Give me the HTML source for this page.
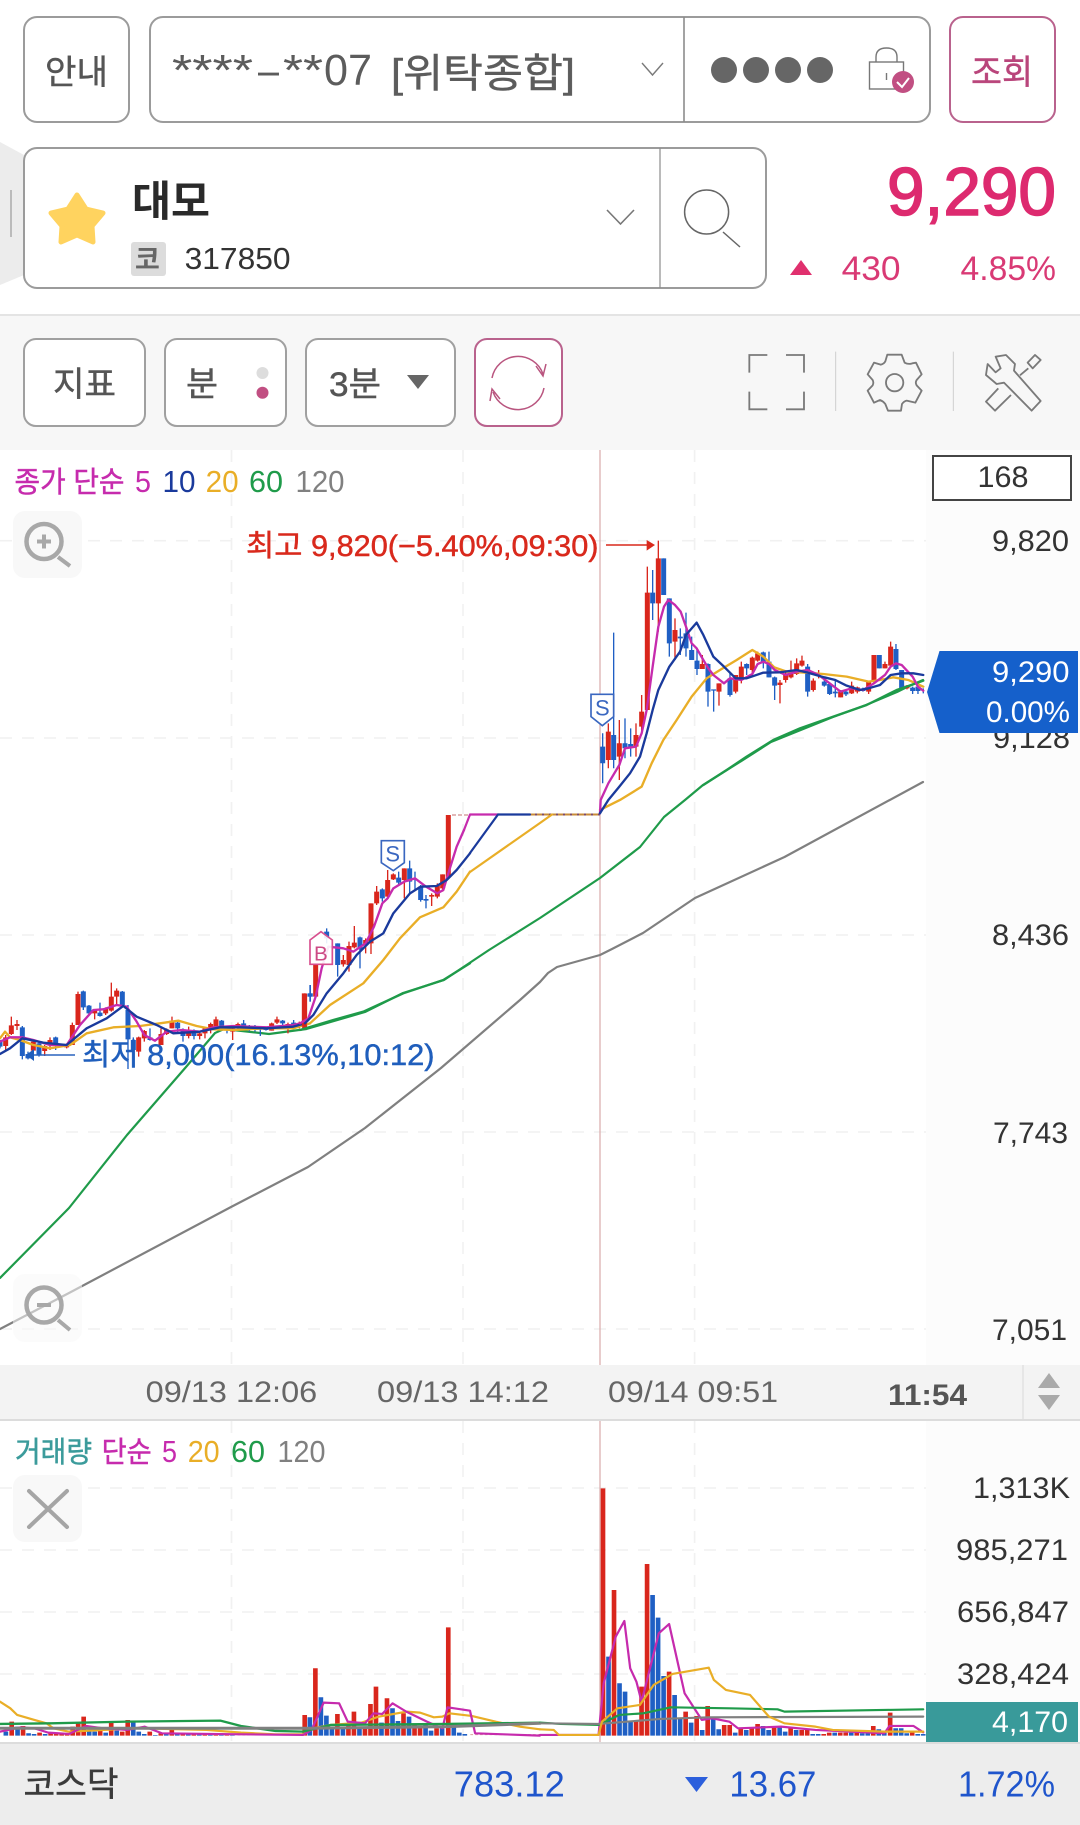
<!DOCTYPE html>
<html lang="ko">
<head>
<meta charset="utf-8">
<title>차트</title>
<style>
html,body{margin:0;padding:0;background:#fff;width:1080px;height:1825px;overflow:hidden}
svg{display:block;filter:blur(.35px)}
text{font-family:"Liberation Sans","Noto Sans CJK KR",sans-serif;white-space:pre}
.ma{fill:none;stroke-linejoin:round;stroke-linecap:round}
.ax{font-size:30px;fill:#333}
.m{stroke-width:.45px;paint-order:stroke}
</style>
</head>
<body>
<svg xmlns="http://www.w3.org/2000/svg" width="1080" height="1825" viewBox="0 0 1080 1825">
<rect width="1080" height="1825" fill="#fff"/>

<!-- top row -->
<rect x="24" y="17" width="105" height="105" rx="13" fill="#fff" stroke="#9b9b9b" stroke-width="2"/>
<text class="m" x="45" y="84" font-size="34" fill="#555" stroke="#555" textLength="63" lengthAdjust="spacingAndGlyphs">안내</text>
<rect x="150" y="17" width="780" height="105" rx="13" fill="#fff" stroke="#9b9b9b" stroke-width="2"/>
<path d="M684 17V122" stroke="#8c8c8c" stroke-width="1.600"/>
<g font-size="44" fill="#5c5c5c">
<text x="172" y="85" textLength="81" lengthAdjust="spacingAndGlyphs">****</text>
<text x="258" y="85" textLength="21" lengthAdjust="spacingAndGlyphs">–</text>
<text x="283" y="85" textLength="40" lengthAdjust="spacingAndGlyphs">**</text>
<text x="324" y="85" textLength="48" lengthAdjust="spacingAndGlyphs">07</text>
</g>
<text class="m" x="391" y="87" font-size="40" fill="#5c5c5c" stroke="#5c5c5c" textLength="184" lengthAdjust="spacingAndGlyphs">[위탁종합]</text>
<path d="M642 63L652.500 75L663 63" fill="none" stroke="#7a7a7a" stroke-width="1.400"/>
<g fill="#666"><circle cx="724" cy="70" r="13"/><circle cx="756" cy="70" r="13"/><circle cx="788" cy="70" r="13"/><circle cx="820" cy="70" r="13"/></g>
<rect x="869.500" y="62" width="34" height="27" fill="none" stroke="#777" stroke-width="1.400"/>
<path d="M876 62V57Q876 48 886.500 48Q897 48 897 57V62M886.500 73V80" fill="none" stroke="#777" stroke-width="1.400"/>
<circle cx="903" cy="82" r="11" fill="#c14f82"/>
<path d="M897 82L902 87L909 78" fill="none" stroke="#fff" stroke-width="2"/>
<rect x="950" y="17" width="105" height="105" rx="13" fill="#fff" stroke="#b9628d" stroke-width="2"/>
<text class="m" x="971" y="84" font-size="34" fill="#b9457b" stroke="#b9457b" textLength="62" lengthAdjust="spacingAndGlyphs">조회</text>

<!-- stock row -->
<polygon points="0,142 24,155 24,275 0,285" fill="#ececec"/>
<path d="M11 190V237" stroke="#bbb" stroke-width="2"/>
<rect x="24" y="148" width="742" height="140" rx="13" fill="#fff" stroke="#9b9b9b" stroke-width="2"/>
<path d="M660 148V288" stroke="#8c8c8c" stroke-width="1.200"/>
<polygon points="77,195 86,209 103,213 92,226 93,242 77,235 61,242 62,226 51,213 68,209" fill="#ffd35f" stroke="#ffd35f" stroke-width="5" stroke-linejoin="round"/>
<text x="132" y="216" font-size="42" font-weight="700" fill="#2a2a2a" textLength="78" lengthAdjust="spacingAndGlyphs">대모</text>
<rect x="131" y="242" width="35" height="34" rx="3" fill="#dcdcdc"/>
<text x="135" y="269" font-size="27" font-weight="700" fill="#666">코</text>
<text x="184.600" y="269" font-size="31" fill="#333" textLength="106" lengthAdjust="spacingAndGlyphs">317850</text>
<path d="M607 210L620.500 224L634 210" fill="none" stroke="#777" stroke-width="1.600"/>
<circle cx="706.600" cy="212" r="22" fill="none" stroke="#666" stroke-width="1.500"/>
<path d="M723 232L740 247" stroke="#666" stroke-width="1.500"/>
<text x="887" y="215" font-size="68" fill="#dd2a6f" stroke="#dd2a6f" stroke-width="1.500" textLength="169" lengthAdjust="spacingAndGlyphs">9,290</text>
<polygon points="790,275 801,260 812,275" fill="#e0306e"/>
<text x="841.600" y="280" font-size="34" fill="#d93a75" textLength="59" lengthAdjust="spacingAndGlyphs">430</text>
<text x="960.500" y="280" font-size="34" fill="#d93a75" textLength="95.500" lengthAdjust="spacingAndGlyphs">4.85%</text>

<!-- toolbar -->
<rect x="0" y="314" width="1080" height="136" fill="#f7f7f7"/>
<rect x="0" y="314" width="1080" height="2" fill="#e4e4e4"/>
<rect x="24" y="339" width="121" height="87" rx="12" fill="#fff" stroke="#a0a0a0" stroke-width="2"/>
<text class="m" x="53" y="396" font-size="34" fill="#555" stroke="#555" textLength="63" lengthAdjust="spacingAndGlyphs">지표</text>
<rect x="165" y="339" width="121" height="87" rx="12" fill="#fff" stroke="#a0a0a0" stroke-width="2"/>
<text class="m" x="186" y="396" font-size="34" fill="#555" stroke="#555" textLength="32" lengthAdjust="spacingAndGlyphs">분</text>
<circle cx="262.500" cy="373" r="6" fill="#ddd"/><circle cx="262.500" cy="392.700" r="6" fill="#c14f82"/>
<rect x="306" y="339" width="149" height="87" rx="12" fill="#fff" stroke="#a0a0a0" stroke-width="2"/>
<text class="m" x="329" y="396" font-size="34" fill="#555" stroke="#555" textLength="52" lengthAdjust="spacingAndGlyphs">3분</text>
<polygon points="407,375 429,375 418,389" fill="#666"/>
<rect x="475" y="339" width="87" height="87" rx="12" fill="#fff" stroke="#b9628d" stroke-width="2"/>
<path d="M492 378A26.500 26.500 0 0 1 543 374M536 366L543 376L546 364M544 388A26.500 26.500 0 0 1 493 392M500 399L492 389L490 401" fill="none" stroke="#b9557f" stroke-width="1.500"/>
<g transform="translate(730 340) scale(.3333)" fill="none" stroke="#7a7a7a" stroke-width="5.500">
<path d="M58 98V45H112M168 45H222V98M58 155V208H112M168 208H222V155"/>
<path d="M317 35V213M670 35V213" stroke="#cfcfcf" stroke-width="3"/>
<path d="M472 44H515L524 68Q535 74 547 70L558 68L575 103L560 120Q555 128 560 136L575 152L556 188L530 182Q522 184 516 192L513 212H474L466 192Q460 184 450 180L432 188L413 152L428 136Q432 128 428 120L413 103L432 68L452 74Q462 72 466 64Z" stroke-linejoin="round"/>
<circle cx="494" cy="128" r="26"/>
<path d="M797 50L828 45L855 72L852 92L932 183L905 212L822 128L800 132L768 105L773 72L797 97L812 85Z" stroke-linejoin="round"/>
<path d="M893 68L915 45L932 60L908 85ZM895 85L870 106M805 145L768 185L795 212L843 165" stroke-linejoin="round"/>
</g>

<!-- price chart background -->
<rect x="926" y="450" width="154" height="915" fill="#fcfcfc"/>
<g stroke="#f1f1f1" stroke-width="1.600" stroke-dasharray="12 10" fill="none">
<path d="M0 540.700H926M0 738H926M0 935H926M0 1132H926M0 1329H926"/>
<path d="M231.500 450V1365M463 450V1365M694.600 450V1365"/>
</g>
<path d="M600 450V1365" stroke="#dbb0b0" stroke-width="1.300"/>

<!-- legend -->
<g font-size="31">
<text class="m" x="14.500" y="492" font-size="29" fill="#c62bad" stroke="#c62bad" textLength="110" lengthAdjust="spacingAndGlyphs">종가 단순</text>
<text x="135" y="492" fill="#c62bad" textLength="16" lengthAdjust="spacingAndGlyphs">5</text>
<text x="162.500" y="492" fill="#1a3a9c" textLength="33" lengthAdjust="spacingAndGlyphs">10</text>
<text x="205.600" y="492" fill="#e9ae27" textLength="33" lengthAdjust="spacingAndGlyphs">20</text>
<text x="249" y="492" fill="#1f9b4a" textLength="34" lengthAdjust="spacingAndGlyphs">60</text>
<text x="295.500" y="492" fill="#808080" textLength="49" lengthAdjust="spacingAndGlyphs">120</text>
</g>
<rect x="933" y="456" width="138" height="44" fill="#fff" stroke="#444" stroke-width="2"/>
<text x="977.500" y="487" font-size="30" fill="#333" textLength="51" lengthAdjust="spacingAndGlyphs">168</text>

<!-- MA lines long -->
<path class="ma" stroke="#808080" stroke-width="2.200" d="M0 1329L69 1293L231 1207L308 1167L365 1128L441 1068L520 1000L540 982L548 973L557 967L600 955L612 949L643 933L695 898L784.500 857L923 782"/>
<path class="ma" stroke="#1f9b4a" stroke-width="2.200" d="M0 1278L69 1208L127 1135L186 1067L215 1033L224 1029L269 1034L306.500 1029L365 1012L403 993L444 980L489 950L540 918L600 878L640 847L664 817L685 800L703 785L743 760L771 742L833 717L866 705L897 692L907 687L923 680"/>

<!-- left candles: zoom8 -->
<g transform="translate(0 950) scale(.3333)" fill="none">
<path stroke="#d9261c" stroke-width="4" d="M17 255V300M34 200V255M51 210V240M100 270V320M134 285V318M150 262V300M200 280V295M217 218V285M234 125V225M284 178V208M317 172V195M334 98V185M350 115V165M416 260V320M433 240V275M483 235V285M500 235V255M516 200V235M566 230V265M599 248V268M615 235V265M632 218V250M648 200V235M698 232V270M714 218V240M815 218V242M831 200V222M864 218V250M898 215V235M914 130V240"/>
<path stroke="#1f5fc4" stroke-width="4" d="M0 270V295M67 228V328M84 305V328M117 275V320M167 260V300M250 122V180M267 165V195M300 158V200M367 123V168M384 165V357M400 262V320M450 235V272M533 215V250M549 235V275M582 238V268M665 210V240M681 228V250M731 210V240M748 225V245M765 225V245M781 228V258M798 232V242M848 210V232M881 210V232M931 105V155"/>
<path stroke="#d9261c" stroke-width="15" d="M17 262V288M34 226V252M51 222V228M100 275V302M134 288V303M150 270V282M200 283V292M217 225V285M234 132V225M284 180V190M317 177V190M334 140V182M350 122V140M416 262V305M433 243V265M483 252V285M500 238V252M516 212V235M566 240V258M599 250V258M615 235V250M632 222V240M648 208V235M698 236V245M714 222V235M815 220V242M831 208V218M864 222V228M898 222V228M914 132V235"/>
<path stroke="#1f5fc4" stroke-width="15" d="M0 272V290M67 232V318M84 312V325M117 280V315M167 262V287M250 124V172M267 167V190M300 188V198M367 125V165M384 180V268M400 270V300M450 262V270M533 218V235M549 238V258M582 245V258M665 212V235M681 232V238M731 220V232M748 230V235M765 232V236M781 232V236M798 233V240M848 212V220M881 218V228M931 130V140"/>
<path class="ma" stroke="#e9ae27" stroke-width="7" d="M0 265L15 245L30 262L60 270L100 285L150 295L210 285L260 250L340 232L420 228L480 220L535 212L590 228L640 238L700 240L800 235L880 235L930 220"/>
<path class="ma" stroke="#c62bad" stroke-width="7" d="M0 275L30 262L67 262L100 270L150 285L200 285L240 225L280 180L310 178L350 165L380 170L410 215L433 255L465 272L500 245L545 240L600 245L640 232L700 228L800 232L880 225L900 220"/>
<path class="ma" stroke="#1a3a9c" stroke-width="7" d="M0 312L30 295L67 265L130 278L200 285L260 235L320 205L370 168L410 200L470 225L520 250L600 245L660 232L720 232L800 235L880 230L915 220"/>
</g>

<!-- middle candles: zoom10 -->
<g transform="translate(300 830) scale(.3333)" fill="none">
<path stroke="#d9261c" stroke-width="4" d="M130 375V410M147 335V425M163 288V355M197 325V370M213 220V372M230 168V225M263 120V205M280 130V150M313 115V205M395 190V228M412 160V205M428 133V185"/>
<path stroke="#1f5fc4" stroke-width="4" d="M30 465V515M80 295V340M113 340V440M180 320V415M247 175V215M296 125V165M329 92V190M345 125V180M362 165V215M378 195V235"/>
<path stroke="#d9261c" stroke-width="15" d="M13 490V590M47 405V500M130 390V403M147 348V405M163 338V352M197 330V345M213 220V340M230 185V220M263 150V200M280 133V148M313 115V150M395 195V200M412 165V200M428 133V175M445 -45V140"/>
<path stroke="#1f5fc4" stroke-width="15" d="M30 490V500M80 305V325M113 340V405M180 322V358M247 178V205M296 143V158M329 115V155M362 170V210M378 207V212"/>
<path class="ma" stroke="#e9ae27" stroke-width="7" d="M30 580L90 525L190 460L250 390L300 325L360 262L430 232L470 185L510 125"/>
<path class="ma" stroke="#1f9b4a" stroke-width="7" d="M0 600L100 570L190 545L310 490L430 450L510 400"/>
<path class="ma" stroke="#c62bad" stroke-width="7" d="M0 580L25 565L47 500L65 415L85 350L130 355L160 365L197 340L222 290L247 220L263 205L280 175L313 155L345 145L378 170L412 190L430 180L445 130L470 50L492 0"/>
<path class="ma" stroke="#1a3a9c" stroke-width="7" d="M15 580L40 555L80 490L130 430L170 375L210 335L250 310L280 250L330 190L362 170L410 168L440 150L470 120L510 70"/>
<polygon points="30,330 63,305 97,330 97,403 30,403" fill="#fff" fill-opacity=".9" stroke="#d8508f" stroke-width="5"/>
<text x="42" y="392" font-size="62" fill="#cc4a85">B</text>
<polygon points="244,32 313,32 313,98 280,122 244,98" fill="#fff" stroke="#3a67c0" stroke-width="5"/>
<text x="256" y="94" font-size="66" fill="#3a67c0">S</text>
</g>

<!-- flat section -->
<path d="M470 814.500H600" stroke="#7e4a63" stroke-width="2"/>
<path d="M530 814.500H600" stroke="#c88c3a" stroke-width="2" stroke-dasharray="5 2"/>
<path class="ma" stroke="#c62bad" stroke-width="2.200" d="M464 830L470 814.500H498"/>
<path class="ma" stroke="#1a3a9c" stroke-width="2.200" d="M470 853L498 814.500H530"/>
<path class="ma" stroke="#e9ae27" stroke-width="2.200" d="M470 872L540 823L552 814.500"/>
<path d="M452 815H470" stroke="#d9a0a0" stroke-width="1.500" stroke-dasharray="4 2"/>

<!-- right candles: zoom9 -->
<g transform="translate(580 520) scale(.3333)" fill="none">
<path stroke="#d9261c" stroke-width="4" d="M85 610V745M118 600V780M168 610V710M185 525V640M202 140V570M235 62V335M285 295V420M367 405V447M417 490V557M467 465V520M484 425V490M517 410V470M533 395V425M600 480V550M617 450V488M633 422V475M650 415V465M666 407V440M700 475V515M716 450V475M782 510V532M815 485V522M832 500V520M866 482V522M882 405V490M915 425V445M932 365V440M981 495V508"/>
<path stroke="#1f5fc4" stroke-width="4" d="M68 640V790M101 338V745M135 595V715M152 625V710M218 150V300M251 115V225M268 235V410M301 325V405M318 278V410M335 350V420M351 385V465M384 430V560M401 510V575M450 460V530M500 430V465M550 395V445M567 395V472M584 470V540M683 432V530M733 475V500M749 490V525M766 478V532M798 510V528M849 503V515M898 405V445M948 372V450M965 450V508M998 500V522M1014 497V522M1030 505V520"/>
<path stroke="#d9261c" stroke-width="15" d="M85 635V720M118 670V710M168 645V680M185 575V620M202 218V570M235 115V250M285 330V365M367 432V447M417 490V515M467 465V515M484 440V475M517 413V450M533 400V422M600 488V495M617 460V480M633 450V472M650 430V462M666 422V437M700 482V510M782 515V532M815 497V520M832 502V515M866 485V515M882 405V485M915 432V445M932 380V437M981 497V505"/>
<path stroke="#1f5fc4" stroke-width="15" d="M68 680V730M101 645V720M135 670V685M152 672V684M218 218V250M251 115V225M268 235V370M301 350V355M318 340V385M335 390V420M351 422V447M384 432V515M401 508V512M450 475V525M500 432V445M550 397V425M567 425V472M584 472V497M683 440V515M733 485V497M749 492V522M766 515V520M798 515V523M849 505V513M898 405V445M948 387V447M965 450V507M998 503V513M1014 500V513"/>
<path class="ma" stroke="#e9ae27" stroke-width="7" d="M60 870L120 840L185 800L215 730L250 660L290 600L335 530L380 475L420 450L470 420L517 390L550 410L583 442L620 455L680 458L730 462L800 470L866 485L900 480L940 472L985 480L1030 500"/>
<path class="ma" stroke="#1f9b4a" stroke-width="7" d="M370 795L440 750L500 710L580 660L660 625L760 590L860 555L950 510L980 500L1030 482"/>
<path class="ma" stroke="#c62bad" stroke-width="7" d="M60 880L62 840L85 790L118 735L135 685L168 680L185 640L200 570L218 440L235 320L252 260L265 240L285 255L302 275L318 320L335 370L350 385L370 420L385 445L400 465L432 490L450 475L484 480L517 462L533 432L550 425L567 432L584 450L617 465L650 455L683 450L716 465L749 490L782 515L815 505L849 510L866 500L882 490L915 465L932 440L948 430L965 435L998 470L1014 500L1030 512"/>
<path class="ma" stroke="#1a3a9c" stroke-width="7" d="M60 880L85 840L118 800L150 760L180 710L200 640L218 570L235 510L268 440L300 395L318 345L350 308L370 345L400 410L432 440L467 475L500 475L550 458L600 457L650 450L683 458L733 472L766 480L800 497L840 510L866 505L900 495L932 465L965 460L1000 460L1030 465"/>
<polygon points="33,523 101,523 101,590 67,617 33,590" fill="#fff" stroke="#3a67c0" stroke-width="5"/>
<text x="45" y="587" font-size="66" fill="#3a67c0">S</text>
<path d="M78 75H205" stroke="#d9291c" stroke-width="4.500"/>
<polygon points="200,60 225,75 200,92" fill="#d9291c"/>
</g>

<!-- hi / low labels -->
<text class="m" x="246" y="556" font-size="30" fill="#d9291c" stroke="#d9291c" textLength="352.500" lengthAdjust="spacingAndGlyphs">최고 9,820(−5.40%,09:30)</text>
<path d="M34 1055H75" stroke="#2a63bd" stroke-width="1.500"/>
<polygon points="26,1055 34,1049 34,1061" fill="#1f5ebc"/>
<text class="m" x="82" y="1065" font-size="30" fill="#1f5ebc" stroke="#1f5ebc" textLength="352.500" lengthAdjust="spacingAndGlyphs">최저 8,000(16.13%,10:12)</text>

<!-- zoom buttons -->
<rect x="13" y="511" width="69" height="67" rx="12" fill="#f8f8f8" fill-opacity=".95"/>
<circle cx="44" cy="541.500" r="17.500" fill="none" stroke="#a8a8a8" stroke-width="4.500"/>
<path d="M37 541.500H51M44 534.500V548.500M58 557L70 566" stroke="#a8a8a8" stroke-width="4" fill="none"/>
<rect x="13" y="1274" width="69" height="68" rx="12" fill="#f8f8f8" fill-opacity=".55"/>
<circle cx="44" cy="1305" r="17.500" fill="none" stroke="#a8a8a8" stroke-width="4.500"/>
<path d="M37 1305H51M58 1320L70 1330" stroke="#a8a8a8" stroke-width="4" fill="none"/>

<!-- axis labels -->
<text class="ax" x="992" y="551" textLength="77" lengthAdjust="spacingAndGlyphs">9,820</text>
<text class="ax" x="993" y="748" textLength="77" lengthAdjust="spacingAndGlyphs">9,128</text>
<text class="ax" x="992" y="945" textLength="77" lengthAdjust="spacingAndGlyphs">8,436</text>
<text class="ax" x="993" y="1143" textLength="75" lengthAdjust="spacingAndGlyphs">7,743</text>
<text class="ax" x="992" y="1340" textLength="75" lengthAdjust="spacingAndGlyphs">7,051</text>
<polygon points="927,692 939.500,651 1078,651 1078,733 939.500,733" fill="#1560cb"/>
<text x="992" y="682" font-size="30" fill="#fff" textLength="77.500" lengthAdjust="spacingAndGlyphs">9,290</text>
<text x="986" y="722" font-size="30" fill="#fff" textLength="84" lengthAdjust="spacingAndGlyphs">0.00%</text>

<!-- time bar -->
<rect x="0" y="1365" width="1080" height="54" fill="#f3f3f3"/>
<rect x="0" y="1419" width="1080" height="2" fill="#dcdcdc"/>
<g font-size="30" fill="#666">
<text x="145.700" y="1402" textLength="171.500" lengthAdjust="spacingAndGlyphs">09/13 12:06</text>
<text x="377" y="1402" textLength="172" lengthAdjust="spacingAndGlyphs">09/13 14:12</text>
<text x="608" y="1402" textLength="170" lengthAdjust="spacingAndGlyphs">09/14 09:51</text>
</g>
<text x="888" y="1405" font-size="30" font-weight="700" fill="#555" textLength="79" lengthAdjust="spacingAndGlyphs">11:54</text>
<path d="M1023 1365V1419" stroke="#e2e2e2" stroke-width="1.500"/>
<polygon points="1038,1388 1049,1373 1060,1388" fill="#aaa"/>
<polygon points="1038,1395 1060,1395 1049,1410" fill="#aaa"/>

<!-- volume panel -->
<rect x="926" y="1421" width="154" height="322" fill="#fcfcfc"/>
<g stroke="#f1f1f1" stroke-width="1.600" stroke-dasharray="12 10" fill="none">
<path d="M0 1488H926M0 1550H926M0 1612H926M0 1674H926"/>
<path d="M231.500 1421V1742M463 1421V1742M694.600 1421V1742"/>
</g>
<path d="M600 1421V1742" stroke="#dbb0b0" stroke-width="1.300"/>
<g font-size="31">
<text class="m" x="15" y="1462" font-size="29" fill="#3b9b9b" stroke="#3b9b9b" textLength="77" lengthAdjust="spacingAndGlyphs">거래량</text>
<text class="m" x="101.600" y="1462" font-size="29" fill="#c62bad" stroke="#c62bad" textLength="50" lengthAdjust="spacingAndGlyphs">단순</text>
<text x="162" y="1462" fill="#c62bad" textLength="15" lengthAdjust="spacingAndGlyphs">5</text>
<text x="187.700" y="1462" fill="#e9ae27" textLength="32" lengthAdjust="spacingAndGlyphs">20</text>
<text x="231" y="1462" fill="#1f9b4a" textLength="34" lengthAdjust="spacingAndGlyphs">60</text>
<text x="277.500" y="1462" fill="#808080" textLength="48" lengthAdjust="spacingAndGlyphs">120</text>
</g>
<rect x="13" y="1475" width="69" height="67" rx="12" fill="#f8f8f8"/>
<path d="M29 1491L67 1527M67 1491L29 1527" stroke="#a5a5a5" stroke-width="4" stroke-linecap="round"/>

<!-- volume left: zoom6 -->
<g transform="translate(0 1420) scale(.3443 .3333)" fill="none">
<path stroke="#d9261c" stroke-width="13.500" d="M34 947V905M67 947V918M115 947V938M147 947V938M163 947V938M179 947V942M195 947V940M211 947V920M227 947V908M243 947V890M291 947V930M323 947V905M355 947V935M371 947V900M435 947V935M467 947V940M499 947V930M531 947V940M563 947V942M595 947V942M627 947V942M659 947V942M885 947V885M916 947V745M980 947V882M1012 947V915M1028 947V875M1060 947V925M1076 947V852M1092 947V800M1124 947V835M1172 947V880M1204 947V915M1220 947V918M1268 947V925M1302 947V622"/>
<path stroke="#1f5fc4" stroke-width="13.500" d="M17 947V935M51 947V920M83 947V940M99 947V942M131 947V942M259 947V932M275 947V935M307 947V938M339 947V932M387 947V905M403 947V935M419 947V942M451 947V945M483 947V940M515 947V938M547 947V942M579 947V942M611 947V942M643 947V942M675 947V942M900 947V892M932 947V832M948 947V887M964 947V920M996 947V925M1044 947V925M1108 947V908M1140 947V865M1156 947V903M1188 947V890M1236 947V915M1252 947V932M1284 947V925M1318 947V918M1334 947V938M1350 947V942"/>
<path stroke="#d9a0a0" stroke-width="3" stroke-dasharray="8 6" d="M690 945H880M1366 944H1568"/>
<path class="ma" stroke="#e9ae27" stroke-width="6.500" d="M0 845L30 865L50 885L100 900L135 910L155 925L200 935L400 925L600 930L700 938L800 943L880 943L910 925L960 915L1050 908L1100 890L1180 875L1220 878L1260 892L1285 890L1305 880L1370 888L1440 905L1510 920L1568 928"/>
<path class="ma" stroke="#c62bad" stroke-width="6.500" d="M0 935L60 922L100 925L140 938L200 942L250 918L300 925L370 930L420 920L470 940L700 943L880 945L905 930L940 848L985 850L1010 905L1060 910L1085 880L1110 882L1140 850L1180 875L1240 905L1285 925L1300 862L1365 872L1380 940L1568 947"/>
<path class="ma" stroke="#1f9b4a" stroke-width="7" d="M0 912L150 910L370 905L640 902L700 918L800 933L880 935L960 915L1300 912L1568 908"/>
<path class="ma" stroke="#808080" stroke-width="9" d="M0 925L640 925L900 925L1300 920L1568 910"/>
</g>
<!-- volume right: zoom7 -->
<g transform="translate(540 1420) scale(.3443 .3333)" fill="none">
<path stroke="#d9261c" stroke-width="13.500" d="M183 947V205M215 947V510M279 947V902M295 947V800M311 947V432M375 947V755M423 947V875M455 947V888M487 947V858M535 947V915M551 947V915M583 947V925M615 947V925M632 947V912M680 947V920M728 947V925M760 947V930M776 947V930M824 947V942M840 947V938M872 947V938M888 947V938M920 947V938M968 947V918M1017 947V878M1081 947V935"/>
<path stroke="#1f5fc4" stroke-width="13.500" d="M199 947V710M231 947V790M247 947V815M263 947V905M327 947V525M343 947V593M359 947V768M391 947V825M407 947V895M439 947V908M471 947V930M503 947V895M519 947V928M567 947V938M599 947V930M648 947V918M664 947V930M696 947V918M712 947V935M744 947V930M792 947V942M808 947V942M856 947V938M904 947V938M936 947V940M952 947V940M984 947V928M1000 947V938M1033 947V925M1049 947V925M1065 947V940M1097 947V942M1113 947V942"/>
<path class="ma" stroke="#c62bad" stroke-width="6.500" d="M0 945L170 945L185 790L220 650L245 603L262 745L280 785L295 845L345 640L375 612L420 820L470 900L500 895L550 905L575 925L700 920L800 930L1000 940L1015 918L1085 918L1113 937"/>
<path class="ma" stroke="#1f9b4a" stroke-width="6.500" d="M0 908L60 912L170 915L230 885L300 880L380 862L550 865L690 868L710 875L1113 868"/>
<path class="ma" stroke="#808080" stroke-width="6.500" d="M0 910L170 912L350 897L490 892L1113 890"/>
<path class="ma" stroke="#e9ae27" stroke-width="6.500" d="M0 928L40 930L55 945L170 945L180 905L225 865L290 855L330 795L385 762L490 743L505 780L540 810L610 825L665 890L710 910L800 920L850 930L1000 935L1113 935"/>
</g>

<!-- volume axis -->
<text class="ax" x="973" y="1498" textLength="97" lengthAdjust="spacingAndGlyphs">1,313K</text>
<text class="ax" x="956" y="1560" textLength="112" lengthAdjust="spacingAndGlyphs">985,271</text>
<text class="ax" x="957" y="1622" textLength="112" lengthAdjust="spacingAndGlyphs">656,847</text>
<text class="ax" x="957" y="1684" textLength="112" lengthAdjust="spacingAndGlyphs">328,424</text>
<rect x="926" y="1702" width="152" height="41" fill="#399a9a"/>
<text x="992" y="1732" font-size="30" fill="#fff" textLength="76" lengthAdjust="spacingAndGlyphs">4,170</text>

<!-- footer -->
<rect x="0" y="1742" width="1080" height="83" fill="#ededed"/>
<rect x="0" y="1742" width="1080" height="2" fill="#dcdcdc"/>
<text class="m" x="23.500" y="1796" font-size="34" fill="#3a3a3a" stroke="#3a3a3a" stroke-width=".8" textLength="95" lengthAdjust="spacingAndGlyphs">코스닥</text>
<text x="453.800" y="1796.500" font-size="36" fill="#1f55cc" textLength="111" lengthAdjust="spacingAndGlyphs">783.12</text>
<polygon points="685,1777 708,1777 696.500,1792" fill="#2c5fdc"/>
<text x="729.400" y="1796.500" font-size="36" fill="#1f55cc" textLength="87" lengthAdjust="spacingAndGlyphs">13.67</text>
<text x="958" y="1796.500" font-size="36" fill="#1f55cc" textLength="97" lengthAdjust="spacingAndGlyphs">1.72%</text>
</svg>
</body>
</html>
